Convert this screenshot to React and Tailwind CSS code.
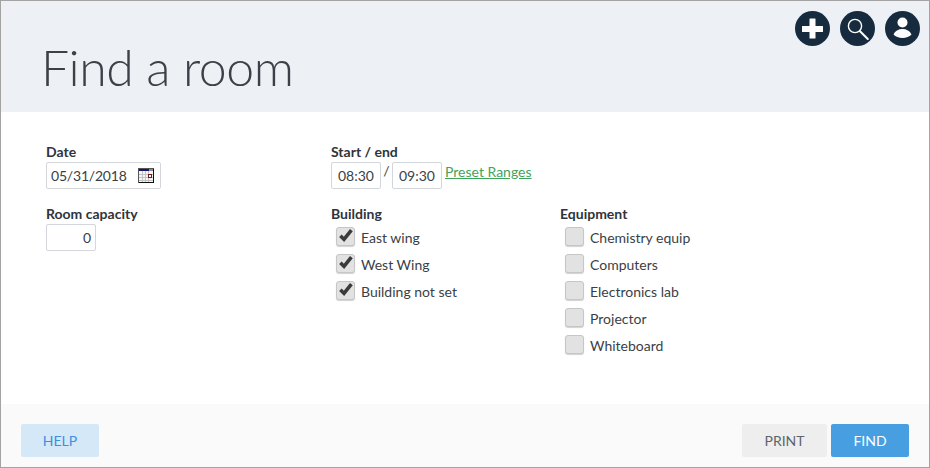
const FONT = 'font-["Lato","Open_Sans",sans-serif]';

function PlusIcon() {
  return (
    <svg width="35" height="35" viewBox="0 0 35 35">
      <circle cx="17.5" cy="17.5" r="17.5" fill="#172b3f" />
      <path d="M15 7.5h5a.5.5 0 0 1 .5.5v7h7a.5.5 0 0 1 .5.5v5a.5.5 0 0 1-.5.5h-7v6a.5.5 0 0 1-.5.5h-5a.5.5 0 0 1-.5-.5v-6h-7a.5.5 0 0 1-.5-.5v-5a.5.5 0 0 1 .5-.5h7V8a.5.5 0 0 1 .5-.5z" fill="#fff" />
    </svg>
  );
}

function SearchIcon() {
  return (
    <svg width="35" height="35" viewBox="0 0 35 35">
      <circle cx="17.5" cy="17.5" r="17.5" fill="#172b3f" />
      <circle cx="15" cy="15" r="6.6" fill="none" stroke="#fff" strokeWidth="1.4" />
      <path d="M19.8 20l8 8" stroke="#fff" strokeWidth="2" strokeLinecap="round" />
    </svg>
  );
}

function UserIcon() {
  return (
    <svg width="35" height="35" viewBox="0 0 35 35">
      <circle cx="17.5" cy="17.5" r="17.5" fill="#172b3f" />
      <circle cx="17.5" cy="11.5" r="5" fill="#fff" />
      <path d="M8.5 23.5c1.6-3.6 5-5.5 9-5.5s7.4 1.9 9 5.5c-2 2.2-5.4 3.5-9 3.5s-7-1.3-9-3.5z" fill="#fff" />
    </svg>
  );
}

function CalendarIcon() {
  return (
    <svg width="16" height="15" viewBox="0 0 16 15" shapeRendering="crispEdges">
      <rect x="0.5" y="0.5" width="15" height="14" fill="#f4f4f4" stroke="#555" />
      <rect x="1" y="1" width="10" height="2" fill="#16166b" />
      <rect x="11" y="1" width="4" height="2" fill="#8a8a8a" />
      <path d="M1 6.5h14M1 9.5h14M1 12.5h14M4.5 3v11M7.5 3v11M10.5 3v11" stroke="#c4c4c4" fill="none" />
      <rect x="10.5" y="6.5" width="3" height="3" fill="#fff" stroke="#7a1818" />
      <path d="M15.5 1v13.5H1" stroke="#111" fill="none" />
    </svg>
  );
}

function CheckRow({ label, checked }) {
  return (
    <label className="flex items-center h-[27px] text-[14px] text-[#3a3f46]">
      <span className="relative w-[19px] h-[19px] ml-[5px] mr-[6px] mb-[2px] rounded-[3px] border border-[#c6c6c6] bg-[#e2e2e2] shadow-[0_1px_1px_rgba(0,0,0,0.18)] shrink-0">
        {checked && (
          <svg className="absolute left-[1px] top-[0px]" width="16" height="15" viewBox="0 0 16 15">
            <path d="M2.4 7.8l3.6 3.6L13.4 2.2" fill="none" stroke="#3b3b3b" strokeWidth="3.6" />
          </svg>
        )}
      </span>
      <span>{label}</span>
    </label>
  );
}

const inputBox = 'h-[27px] border border-[#d3d6da] rounded-[2px] bg-white text-[14px] text-[#3a3f46] flex items-center';
const labelText = 'text-[14px] font-bold leading-[18px] mb-px text-[#2f343b]';

export default function App() {
  return (
    <div className={`${FONT} w-[930px] h-[468px] border border-[#a3a3a3] bg-white flex flex-col overflow-hidden`}>
      {/* Header */}
      <div className="h-[111px] bg-[#edf1f5] relative shrink-0">
        <h1 className="pl-[40px] pt-[36px] text-[50px] leading-[60px] font-light tracking-[-0.5px] text-[#3c4149]">Find a room</h1>
        <div className="absolute right-[9px] top-[10px] flex gap-[10px]">
          <PlusIcon />
          <SearchIcon />
          <UserIcon />
        </div>
      </div>

      {/* Form */}
      <div className="flex-1 pl-[45px] pt-[31px] grid grid-cols-[285px_229px_1fr] grid-rows-[62px_1fr]">
        <div>
          <div className={labelText}>Date</div>
          <div className={`${inputBox} w-[115px] pl-[4px]`}>
            <span className="tracking-[-0.2px]">05/31/2018</span>
            <span className="ml-[11px]"><CalendarIcon /></span>
          </div>
        </div>
        <div className="col-span-2">
          <div className={labelText}>Start / end</div>
          <div className="flex items-start">
            <div className={`${inputBox} w-[50px] justify-center`}>08:30</div>
            <span className="w-[11px] text-center text-[14px] leading-[18px] text-[#3a3f46]">/</span>
            <div className={`${inputBox} w-[50px] justify-center`}>09:30</div>
            <a className="ml-[3px] mt-px text-[14px] leading-[18px] text-[#3fa45b] underline">Preset Ranges</a>
          </div>
        </div>
        <div>
          <div className={labelText}>Room capacity</div>
          <div className={`${inputBox} w-[50px] justify-end pr-[4px]`}>0</div>
        </div>
        <div>
          <div className={labelText}>Building</div>
          <CheckRow label="East wing" checked />
          <CheckRow label="West Wing" checked />
          <CheckRow label="Building not set" checked />
        </div>
        <div>
          <div className={labelText}>Equipment</div>
          <CheckRow label="Chemistry equip" />
          <CheckRow label="Computers" />
          <CheckRow label="Electronics lab" />
          <CheckRow label="Projector" />
          <CheckRow label="Whiteboard" />
        </div>
      </div>

      {/* Footer */}
      <div className="h-[63px] bg-[#fafafa] shrink-0 flex items-start justify-between pl-[20px] pr-[20px] pt-[20px]">
        <button className="w-[78px] h-[33px] rounded-[2px] bg-[#d5e8f8] text-[14px] text-[#3d8fe0]">HELP</button>
        <div className="flex gap-[4px]">
          <button className="w-[85px] h-[33px] rounded-[2px] bg-[#eeeeee] text-[14px] text-[#5f646b]">PRINT</button>
          <button className="w-[78px] h-[33px] rounded-[2px] bg-[#479fe1] text-[14px] text-white">FIND</button>
        </div>
      </div>
    </div>
  );
}
